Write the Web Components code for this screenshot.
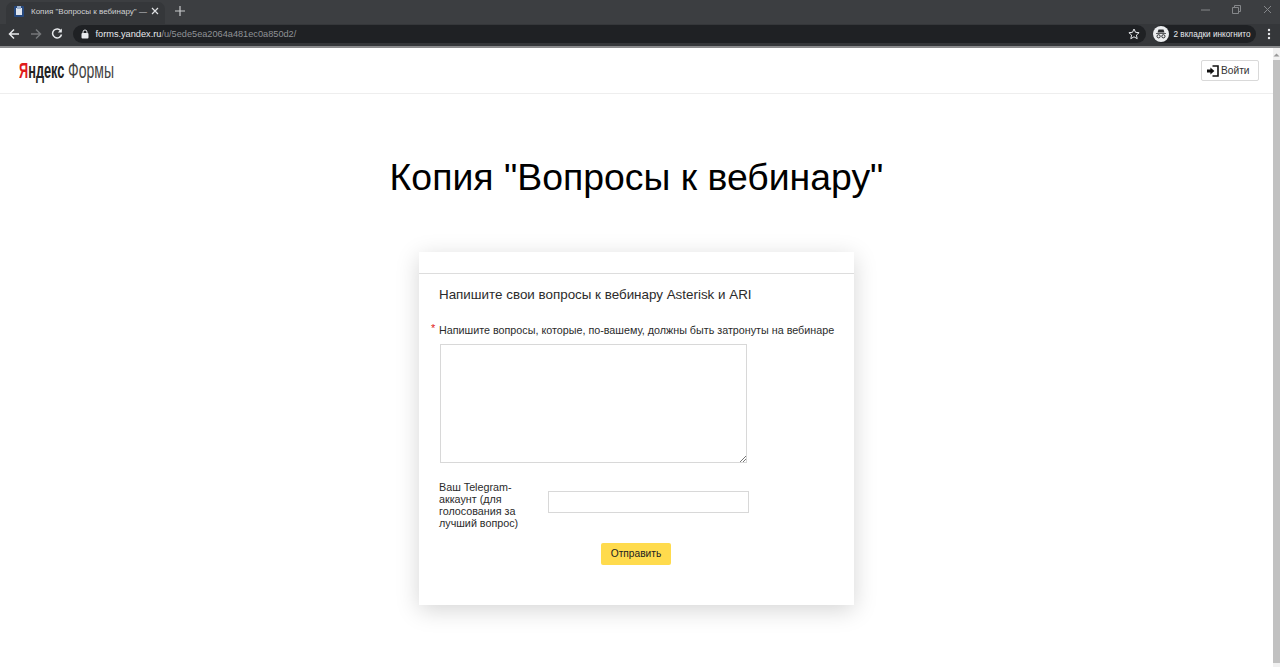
<!DOCTYPE html>
<html lang="ru"><head><meta charset="utf-8"><title>Копия</title>
<style>
html,body{margin:0;padding:0;height:667px;overflow:hidden;background:#fff;font-family:"Liberation Sans",Arial,sans-serif}
body{display:flex;flex-direction:column}
</style></head><body>
<browser-chrome></browser-chrome>
<page-shell>
  <site-header slot="header"></site-header>
  <h1 slot="title">Копия "Вопросы к вебинару"</h1>
  <form-card></form-card>
</page-shell>
<script>
function def(name, html){
  customElements.define(name, class extends HTMLElement{
    constructor(){super();this.attachShadow({mode:'open'}).innerHTML=html;}
  });
}
def('browser-chrome',`<style>
:host{display:block;height:48px;background:#3a3c3f;color:#dfe1e3;font:8px "Liberation Sans",Arial,sans-serif;flex:none}
.tabs{height:24px;display:flex;align-items:flex-end;padding-left:6px;background:#3c3e41}
.tab{width:159px;height:22px;background:#35373a;border-radius:7px 7px 0 0;display:flex;align-items:center;box-sizing:border-box;padding:0 6px 4px 8px;gap:7px;white-space:nowrap;color:#cfd1d3}
.tab span{flex:1;font-size:8px;min-width:0}
.plus{margin:0 0 6px 8px;width:14px;height:14px}
.win{margin-left:auto;display:flex;gap:22px;padding:0 8px 10px 0;align-self:flex-end}
.bar{height:24px;box-sizing:border-box;background:#35373a;display:flex;align-items:center;padding:0 9px 2px 8px;border-bottom:2px solid #8a8b8d}
.bar svg.nav{margin-right:9.5px;flex:none}
.url{width:1073px;height:18px;border-radius:9px;background:#1f2124;display:flex;align-items:center;font-size:9.2px;color:#8f9296;padding:0 6px 0 8px;box-sizing:border-box;white-space:nowrap}
.url b{font-weight:400;color:#e8eaed}
.url svg.lock{margin-right:7px}
.url svg.star{margin-left:auto}
.inc{margin-left:7px;width:103px;height:18px;border-radius:9px;background:#1f2124;display:flex;align-items:center;gap:5px;font-size:8.2px;color:#e8eaed;box-sizing:border-box;white-space:nowrap}
.dots{margin-left:auto}
</style>
<div class="tabs"><div class="tab">
<svg width="10" height="11" viewBox="0 0 10 11"><rect x="0" y="0" width="10" height="11" rx="1" fill="#27497e"/><rect x="2" y="2" width="6" height="7" fill="#dfe5ee"/><rect x="3" y="0" width="4" height="3" fill="#9fb4d2"/></svg>
<span>Копия "Вопросы к вебинару" —</span>
<svg width="8" height="8" viewBox="0 0 8 8" stroke="#dfe1e3" stroke-width="1.2"><path d="M1 1l6 6M7 1L1 7"/></svg></div>
<svg class="plus" viewBox="0 0 14 14" stroke="#c8cacc" stroke-width="1.2"><path d="M7 2v10M2 7h10"/></svg>
<div class="win">
<svg width="9" height="9" viewBox="0 0 9 9" stroke="#85878a"><path d="M0 5h9"/></svg>
<svg width="9" height="9" viewBox="0 0 9 9" fill="none" stroke="#85878a"><path d="M.5 2.500h6v6h-6zM2.500 2.500v-2h6v6h-2"/></svg>
<svg width="9" height="9" viewBox="0 0 9 9" stroke="#85878a"><path d="M1 1l7 7M8 1L1 8"/></svg>
</div></div>
<div class="bar">
<svg class="nav" width="12" height="12" viewBox="0 0 12 12" fill="none" stroke="#e8eaed" stroke-width="1.5"><path d="M11 6H1.500M6 1.500L1.500 6 6 10.500"/></svg>
<svg class="nav" width="12" height="12" viewBox="0 0 12 12" fill="none" stroke="#75777a" stroke-width="1.5"><path d="M1 6h9.500M6 1.500L10.500 6 6 10.500"/></svg>
<svg class="nav" width="12" height="12" viewBox="0 0 12 12" fill="none" stroke="#e8eaed" stroke-width="1.5"><path d="M10 3.200A4.500 4.500 0 1 0 10.500 6.500"/><path d="M10.800 .6v4H6.800z" fill="#e8eaed" stroke="none"/></svg>
<div class="url">
<svg class="lock" width="8" height="10" viewBox="0 0 8 10"><rect x="0.5" y="4" width="7" height="5.500" rx="1" fill="#e8eaed"/><path d="M2 4.500V3a2 2 0 0 1 4 0v1.500" fill="none" stroke="#e8eaed"/></svg>
<b>forms.yandex.ru</b>/u/5ede5ea2064a481ec0a850d2/
<svg class="star" width="12" height="12" viewBox="0 0 12 12" fill="none" stroke="#e8eaed"><path d="M6 1l1.500 3.300 3.600.4-2.700 2.400.8 3.600L6 8.800l-3.200 1.900.8-3.600L.9 4.700l3.600-.4z"/></svg>
</div>
<div class="inc"><svg width="16" height="16" viewBox="0 0 16 16"><circle cx="8" cy="8" r="8" fill="#eceef0"/><path d="M4.500 6.500l1-3h5l1 3zM3 7h10v.8H3z" fill="#2a2c2f"/><circle cx="5.600" cy="10.300" r="1.600" fill="none" stroke="#2a2c2f"/><circle cx="10.400" cy="10.300" r="1.600" fill="none" stroke="#2a2c2f"/></svg><span>2 вкладки инкогнито</span></div>
<svg class="dots" width="4" height="12" viewBox="0 0 4 12" fill="#e8eaed"><circle cx="2" cy="2" r="1.200"/><circle cx="2" cy="6" r="1.200"/><circle cx="2" cy="10" r="1.200"/></svg>
</div>`);
def('page-shell',`<style>
:host{display:flex;flex:1;min-height:0;background:#fff}
.main{flex:1;min-width:0;display:flex;flex-direction:column;align-items:center}
::slotted(site-header){align-self:stretch}
::slotted(h1){font:400 37.4px/44px "Liberation Sans",Arial,sans-serif;color:#000;margin:61px 0 53px}
.scroll{width:7px;background:#f1f1f1;flex:none;display:flex;flex-direction:column;align-items:stretch}
.scroll svg{display:block;margin:5px 0 3px}
.scroll i{flex:1;margin-bottom:4px;background:#c1c1c1}
</style><div class="main"><slot name="header"></slot><slot name="title"></slot><slot></slot></div><div class="scroll"><svg width="7" height="4" viewBox="0 0 7 4"><path d="M3.500 0.500L6.500 3.500h-6z" fill="#9a9a9a"/></svg><i></i></div>`);
def('site-header',`<style>
:host{display:flex;height:46px;box-sizing:border-box;border-bottom:1px solid #eeeeee;align-items:center;padding:0 14px 0 19px}
.logo{font:22px/1 "Liberation Sans Narrow","Liberation Sans",Arial,sans-serif;color:#222;display:flex;white-space:nowrap}
.logo b,.logo span{display:block;transform-origin:left center}
.logo b{font-weight:700;width:45px;transform:scaleX(.58)}.logo b i{color:#e01b1b;font-style:normal}
.logo span{width:46px;margin-left:4px;font-weight:400;color:#444;transform:scaleX(.637)}
.btn{margin-left:auto;height:21px;width:58px;box-sizing:border-box;border:1px solid #d9d9d9;border-radius:2px;font:10.2px "Liberation Sans",Arial,sans-serif;color:#333;display:flex;align-items:center;padding-left:5px;gap:2px}
</style><div class="logo"><b><i>Я</i>ндекс</b><span>Формы</span></div>
<div class="btn"><svg width="12" height="12" viewBox="0 0 12 12"><path d="M0 4.600h3.400V2.400L7.400 6l-4 3.600V7.400H0z" fill="#111"/><path d="M5.500 1H11v10H5.500" fill="none" stroke="#111" stroke-width="1.600"/></svg>Войти</div>`);
def('form-card',`<style>
:host{display:block;width:435px;height:353px;box-sizing:border-box;background:#fff;box-shadow:0 5px 22px rgba(0,0,0,.17);font:10.75px "Liberation Sans",Arial,sans-serif;color:#2b2b2b}
.top{height:22px;box-sizing:border-box;border-bottom:1px solid #dddddd}
.body{padding:13px 20px 0 20px}
h2{font:400 13.4px/16px "Liberation Sans",Arial,sans-serif;margin:0;color:#2b2b2b}
.q{margin-top:21px;line-height:13px;position:relative;white-space:nowrap}
.q em{position:absolute;left:-8px;top:-2px;color:#e02020;font-style:normal;font-size:11px}
.ta{display:block;margin:7px 0 0 1px;width:307px;height:119px;box-sizing:border-box;border:1px solid #d8d8d8;position:relative}
.ta svg{position:absolute;right:0;bottom:0}
.row{display:grid;grid-template-columns:109px 201px;margin-top:18px;align-items:start}
.row label{line-height:12px;width:90px}
.inp{height:22px;box-sizing:border-box;border:1px solid #d8d8d8;margin-top:10px}
.send{display:block;width:70px;height:22px;background:#ffdb4d;border-radius:2px;text-align:center;line-height:22px;margin:14px 0 0 162px;color:#222;font-size:10.2px}
</style><div class="top"></div><div class="body">
<h2>Напишите свои вопросы к вебинару Asterisk и ARI</h2>
<div class="q"><em>*</em>Напишите вопросы, которые, по-вашему, должны быть затронуты на вебинаре</div>
<div class="ta"><svg width="7" height="7" viewBox="0 0 7 7" stroke="#777"><path d="M1 7l6-6M4 7l3-3"/></svg></div>
<div class="row"><label>Ваш Telegram-аккаунт (для голосования за лучший вопрос)</label><div class="inp"></div></div>
<div class="send">Отправить</div></div>`);
</script></body></html>
